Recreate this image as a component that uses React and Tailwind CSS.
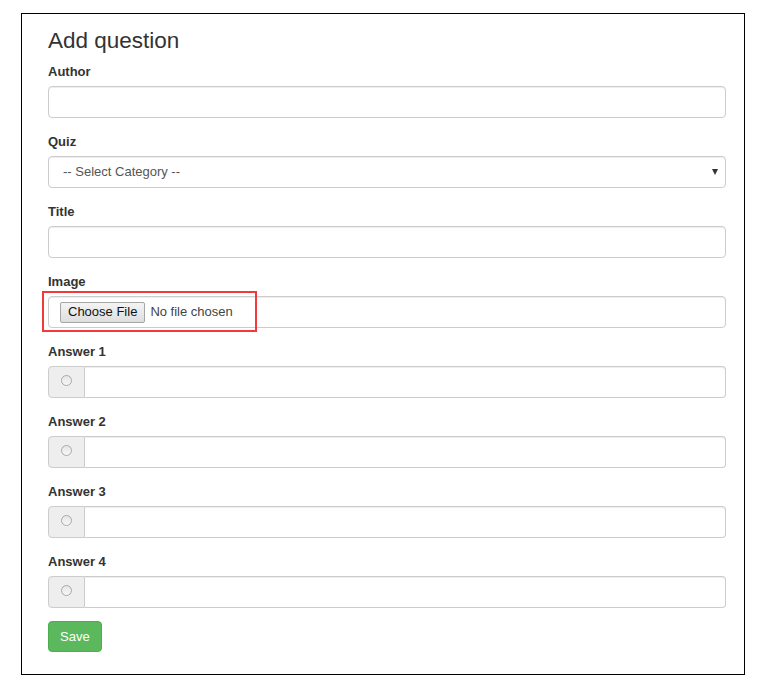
import React from 'react';

const font = { fontFamily: '"Liberation Sans", Arial, Helvetica, sans-serif' };

// Bootstrap-ish form controls, a little smaller than stock (screenshot is scaled)
const inputClass = 'block w-full h-[32px] rounded-[4px] border border-[#cccccc] bg-white px-[11px] text-[13px] text-[#555] shadow-[inset_0_1px_1px_rgba(0,0,0,0.075)] outline-none';

function Label({ children }) {
  return <label className="block h-[18px] leading-[18px] text-[13px] font-bold text-[#333] mb-[5px]">{children}</label>;
}

function Group({ label, last, children }) {
  return (
    <div className={last ? 'mb-[13px]' : 'mb-[15px]'}>
      <Label>{label}</Label>
      {children}
    </div>
  );
}

function AnswerRow() {
  return (
    <div className="flex h-[32px] w-full">
      <span className="w-[37px] shrink-0 flex items-center justify-center rounded-l-[4px] border border-[#cccccc] bg-[#eeeeee]">
        <span className="w-[11px] h-[11px] mb-[3px] rounded-full border border-[#a9a9a9] bg-gradient-to-b from-[#e6e6e6] to-[#f7f7f7]" />
      </span>
      <input type="text" className="flex-1 min-w-0 h-[32px] rounded-r-[4px] border border-l-0 border-[#cccccc] bg-white px-[11px] text-[13px] shadow-[inset_0_1px_1px_rgba(0,0,0,0.075)] outline-none" />
    </div>
  );
}

export default function App() {
  return (
    <div className="bg-white min-h-[686px] pt-[13px] pl-[21px]" style={font}>
      <div className="w-[724px] h-[662px] border border-black pt-[14px] pl-[26px] pr-[18px]">
        <h3 className="text-[22.5px] leading-[26px] font-normal text-[#333] mb-[9px]">Add question</h3>

        <Group label="Author">
          <input type="text" className={inputClass} />
        </Group>

        <Group label="Quiz">
          <div className="relative">
            <div className={inputClass + ' flex items-center pl-[14px]'}>-- Select Category --</div>
            <span className="absolute right-[8px] top-[13px] w-0 h-0 border-l-[3px] border-r-[3px] border-t-[6px] border-l-transparent border-r-transparent border-t-[#333]" />
          </div>
        </Group>

        <Group label="Title">
          <input type="text" className={inputClass} />
        </Group>

        <Group label="Image">
          <div className="relative">
            <div className={inputClass + ' flex items-center'}>
              <span className="h-[21px] px-[7px] flex items-center rounded-[2px] border border-[#a6a6a6] bg-gradient-to-b from-[#f4f4f4] to-[#dedede] text-[13px] text-[#111]">Choose File</span>
              <span className="ml-[5px] text-[13px] text-[#444]">No file chosen</span>
            </div>
            <span className="absolute left-[-6px] top-[-5px] w-[215px] h-[41px] border-2 border-[#f23a3a]" />
          </div>
        </Group>

        {[1, 2, 3, 4].map(n => (
          <Group key={n} label={`Answer ${n}`} last={n === 4}>
            <AnswerRow />
          </Group>
        ))}

        <button className="h-[31px] px-[11px] rounded-[4px] border border-[#4cae4c] bg-[#5cb85c] text-white text-[13px]">Save</button>
      </div>
    </div>
  );
}
